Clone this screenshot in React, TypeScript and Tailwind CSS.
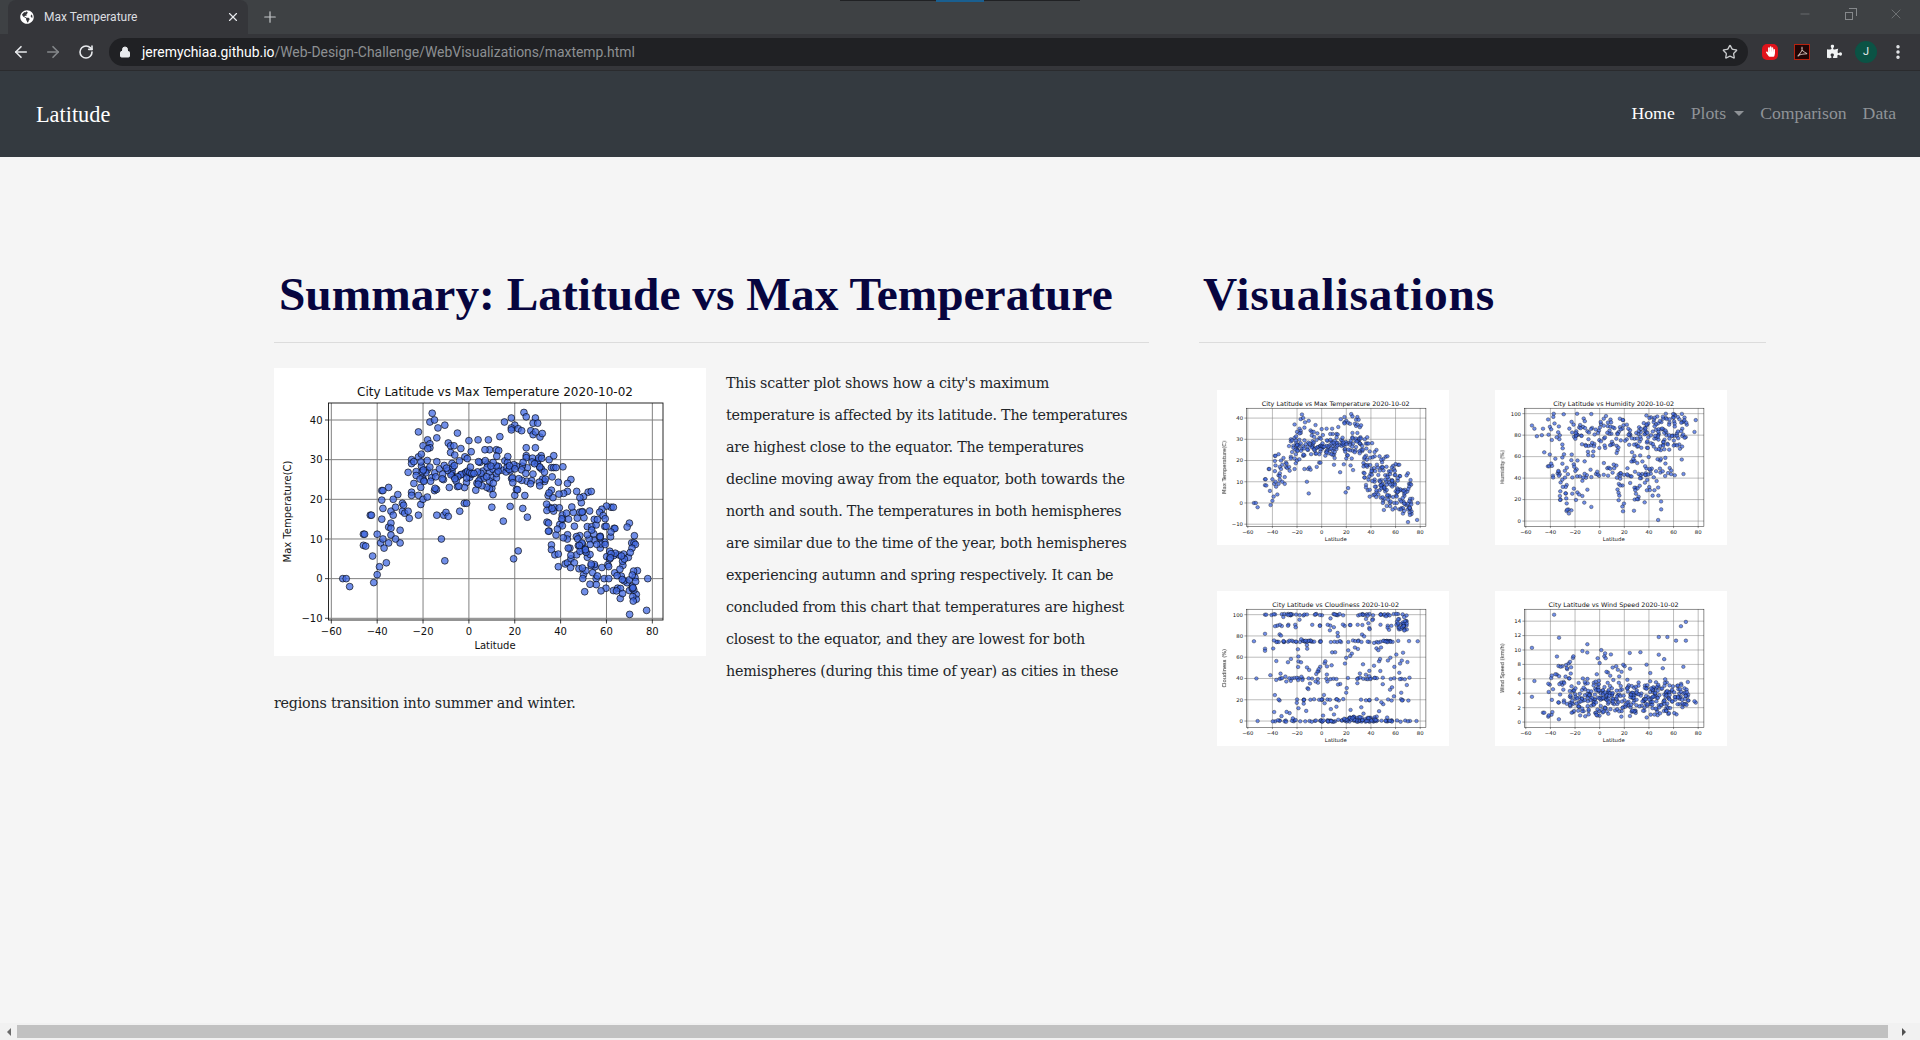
import React from 'react';
import { ArrowLeft, ArrowRight, RotateCw, Lock, Star, X, Plus, Minus, EllipsisVertical } from 'lucide-react';
import { FaGlobeAmericas, FaPuzzlePiece, FaHandPaper } from 'react-icons/fa';

type Pt = [number, number];

// seeded random so the picture stays the same on every load
const makeRng = (seed: number) => () => {
  seed = (seed * 1664525 + 1013904223) % 4294967296;
  return seed / 4294967296;
};

// points read off the main chart
const tempPoints: Pt[] = [
  [-55, 0], [-53.5, 0], [-52, -2], [-41.5, -1], [-40, 1], [-39, 3], [-42, 5.7], [-40, 11.2], [-46, 11.2], [-45.5, 11.2],
  [-46, 8.4], [-45, 8.2], [-43, 16], [-42.5, 16], [-38, 22.2], [-37.5, 22.2], [-35, 23], [-38, 19.8], [-37.5, 17.7], [-38, 15],
  [-38.5, 9], [-37.5, 10], [-37, 7.7], [-36, 4], [-35, 13], [-34, 14], [-34, 12.7], [-34, 11], [-35, 9], [-34, 17],
  [-33, 16], [-33, 20], [-32, 18], [-31, 21.2], [-30, 12.2], [-30, 9], [-32, 10], [-29, 19], [-28.5, 18.5], [-29, 17],
  [-28, 16.5], [-26.5, 17], [-26, 15.2], [-26.5, 26.8], [-25, 30], [-25, 29], [-24, 29.5], [-25, 21.8], [-25, 21], [-24, 24],
  [-23, 27], [-23, 26], [-22, 37], [-22, 30.7], [-22, 16], [-22, 21], [-21, 23], [-21, 18.7], [-20, 20], [-20, 33.5],
  [-18, 35], [-17, 34], [-17, 33], [-17, 39.5], [-16, 41.7], [-15, 40], [-13.5, 38], [-14, 35.5], [-14, 29.5], [-15, 22.2],
  [-14, 16], [-12, 10], [-10.5, 4.5], [-11, 16], [-10, 16.7], [-9, 15.7], [-10.5, 38.7], [-9, 34.2], [-8, 33.5], [-6.5, 33.5],
  [-5, 36.7], [-3.5, 32.8], [-8, 31.8], [-4, 17], [-2, 19], [-1, 19], [0, 34.8], [1, 32], [4, 35], [8.5, 35],
  [9, 32.5], [7, 32.5], [3, 22.3], [10, 18], [10, 22.8], [12, 32.5], [13, 32.3], [13.5, 35.8], [15, 14.5], [15.5, 39.5],
  [18, 18.2], [19.5, 5], [21.5, 7], [18.5, 40.5], [20, 38.7], [18.5, 38], [18.5, 37.5], [21.5, 37.8], [23, 37.3], [24, 41.9],
  [25, 40.8], [27, 37.3], [28, 36.3], [29, 37], [29, 40.5], [28, 39.2], [30, 39.2], [31, 35.7], [32, 36.6], [29, 33],
  [25, 33], [25, 31], [25, 30.5], [31.5, 31], [23.5, 17.7], [25.5, 15.5], [20, 21], [31, 28], [33, 24.5], [35, 30],
  [36, 28], [37, 31], [37, 28], [38, 28], [41, 28.2], [44.5, 25], [39, 24.3], [43, 24], [35, 12], [35, 18],
  [36, 8.5], [36, 7.3], [37.5, 6], [39, 6.2], [39, 3], [38, 11], [42, 3.7], [43, 4], [44.5, 5], [47, 6],
  [46, 4], [48, 2.5], [50, 1], [50.5, -3.3], [51, 2], [54, 1.5], [55, 3], [55.5, 0], [58, 2.8], [59, 0],
  [61, 0], [66, -5], [63, -3], [70, -3], [73, -4], [78, 0], [77.5, -8], [73.5, 2], [70, 14], [69, 13],
  [71, 9], [72, 9], [62, 18], [63, 18], [60, 18.3], [58, 17.5], [52, 21.8], [50, 20.7], [47, 22], [43, 22],
];

const buildTemp = (): Pt[] => {
  const r = makeRng(11);
  const gauss = () => (r() + r() + r() - 1.5) / 0.5;
  const pts = [...tempPoints];
  // dense band around the equator
  for (let i = 0; i < 135; i++) pts.push([-22 + r() * 56, 26.5 + gauss() * 2.2]);
  // the slide towards the north
  for (let i = 0; i < 140; i++) {
    const lat = 33 + r() * 40;
    pts.push([lat, 35 - lat * 0.48 + gauss() * 5]);
  }
  return pts;
};

const buildHumidity = (): Pt[] => {
  const r = makeRng(23);
  const pts: Pt[] = [[47.5, 1], [-25, 7], [-23, 10], [-55, 89], [-53, 86], [-51, 79], [-45, 64], [-42, 51], [-41, 51], [78, 94], [77, 83], [-47, 80], [-46, 86]];
  for (let i = 0; i < 30; i++) pts.push([-34 + r() * 28, 8 + r() * 36]);
  for (let i = 0; i < 48; i++) pts.push([14 + r() * 36, 8 + r() * 38]);
  for (let i = 0; i < 210; i++) pts.push([-42 + r() * 112, 40 + r() * 60]);
  for (let i = 0; i < 70; i++) pts.push([36 + r() * 35, 66 + r() * 34]);
  for (let i = 0; i < 50; i++) pts.push([-20 + r() * 60, 68 + r() * 22]);
  return pts;
};

const buildCloudiness = (): Pt[] => {
  const r = makeRng(37);
  const pts: Pt[] = [[-55, 75], [-53, 40], [-52, 0], [78, 75], [77, 0], [-46, 100], [-45, 100], [-46, 68], [-46, 66], [-46, 82]];
  const bands = [0, 0, 0, 20, 40, 75, 75, 90, 100, 100];
  for (let i = 0; i < 260; i++) pts.push([-42 + r() * 114, bands[Math.floor(r() * bands.length)] + (r() - 0.5) * 1.5]);
  for (let i = 0; i < 150; i++) pts.push([-42 + r() * 112, r() * 100]);
  for (let i = 0; i < 40; i++) pts.push([18 + r() * 26, r() * 4]);
  for (let i = 0; i < 20; i++) pts.push([60 + r() * 11, 85 + r() * 15]);
  return pts;
};

const buildWind = (): Pt[] => {
  const r = makeRng(53);
  const pts: Pt[] = [[-37, 14.9], [-55, 10.3], [-33, 11.7], [-10, 10.8], [48, 11.8], [55, 11.8], [66, 13.3], [70, 13.9], [62, 11.3], [70, 11.3], [78, 2.7], [77, 2.9], [-53, 5.7], [-55, 3.5], [-46, 1.3], [-45, 1.3]];
  for (let i = 0; i < 340; i++) pts.push([-25 + r() * 97, 0.3 + (r() + r()) * 3]);
  for (let i = 0; i < 70; i++) pts.push([-40 + r() * 112, 3 + r() * 7]);
  for (let i = 0; i < 30; i++) pts.push([-42 + r() * 20, 0.3 + r() * 8]);
  return pts;
};

type PlotProps = {
  title: string;
  ylabel: string;
  points: Pt[];
  yTicks: number[];
  yPx: [number, number]; // pixel of first and last tick
  height: number;
  bottom: number;
  titleY: number;
  className?: string;
};

const fmt = (n: number) => (n < 0 ? `\u2212${-n}` : `${n}`);

const ScatterPlot: React.FC<PlotProps> = ({ title, ylabel, points, yTicks, yPx, height, bottom, titleY, className }) => {
  const left = 54.5;
  const right = 389;
  const top = 35;
  const xScale = (v: number) => 194.9 + v * 2.293;
  const y0 = yTicks[0];
  const yN = yTicks[yTicks.length - 1];
  const yScale = (v: number) => yPx[0] + ((v - y0) / (yN - y0)) * (yPx[1] - yPx[0]);
  const xTicks = [-60, -40, -20, 0, 20, 40, 60, 80];
  const mid = (top + bottom) / 2;

  return (
    <svg viewBox={`0 0 432 ${height}`} preserveAspectRatio="none" className={className}>
      <rect width="432" height={height} fill="#fff" />
      <text x="221" y={titleY} fontSize="12" textAnchor="middle" fill="#111">{title}</text>
      {xTicks.map((t) => (
        <g key={t}>
          <line x1={xScale(t)} x2={xScale(t)} y1={top} y2={bottom} stroke="#808080" strokeWidth="1" />
          <line x1={xScale(t)} x2={xScale(t)} y1={bottom} y2={bottom + 3.5} stroke="#111" strokeWidth="0.8" />
          <text x={xScale(t)} y={bottom + 15} fontSize="10" textAnchor="middle" fill="#111">{fmt(t)}</text>
        </g>
      ))}
      {yTicks.map((t) => (
        <g key={t}>
          <line x1={left} x2={right} y1={yScale(t)} y2={yScale(t)} stroke="#808080" strokeWidth="1" />
          <line x1={left - 3.5} x2={left} y1={yScale(t)} y2={yScale(t)} stroke="#111" strokeWidth="0.8" />
          <text x={left - 6} y={yScale(t) + 3.6} fontSize="10" textAnchor="end" fill="#111">{fmt(t)}</text>
        </g>
      ))}
      {points.map(([x, y], i) => (
        <circle key={i} cx={xScale(x)} cy={yScale(y)} r="3.4" fill="#4169e1" fillOpacity="0.75" stroke="#000" strokeOpacity="0.7" strokeWidth="0.9" />
      ))}
      <rect x={left} y={top} width={right - left} height={bottom - top} fill="none" stroke="#111" strokeWidth="0.9" />
      <text x="221" y={bottom + 29} fontSize="10" textAnchor="middle" fill="#111">Latitude</text>
      <text x="17" y={mid} fontSize="10" textAnchor="middle" fill="#111" transform={`rotate(-90 17 ${mid})`}>{ylabel}</text>
    </svg>
  );
};

const temp = buildTemp();
const humidity = buildHumidity();
const cloudiness = buildCloudiness();
const wind = buildWind();

const Thumb: React.FC<Omit<PlotProps, 'height' | 'bottom' | 'titleY' | 'className'>> = (props) => (
  <div className="w-[232px] h-[155px] bg-white overflow-hidden">
    <div className="w-full h-full blur-[0.45px]">
      <ScatterPlot {...props} height={298} bottom={262} titleY={31} className="block w-full h-full [font-family:'DejaVu_Sans',sans-serif]" />
    </div>
  </div>
);

const BrowserChrome = () => (
  <div className="shrink-0 font-['Roboto',sans-serif]">
    {/* tab strip */}
    <div className="h-[34px] bg-[#3e4144] flex items-end relative">
      <div className="absolute top-0 left-[840px] w-[240px] h-px bg-[#202124]">
        <div className="ml-[96px] w-[48px] h-[2px] bg-[#1a5f90]" />
      </div>
      <div className="ml-2 w-[240px] h-[34px] bg-[#35363a] rounded-t-lg flex items-center pl-[12px] pr-[8px]">
        <FaGlobeAmericas className="w-[14px] h-[14px] text-white" />
        <span className="ml-[10px] text-xs text-[#dcdee0] flex-1">Max Temperature</span>
        <X className="w-[14px] h-[14px] text-[#e8eaed]" strokeWidth={2} />
      </div>
      <Plus className="ml-[13px] mb-[8px] w-[18px] h-[18px] text-[#c4c7c9]" strokeWidth={1.6} />
      <div className="ml-auto flex items-center h-full text-[#85888b]">
        <Minus className="w-[14px] h-[14px] mb-[6px]" strokeWidth={1} />
        <div className="ml-[33px] mb-[6px] w-[12px] h-[12px] relative">
          <div className="absolute left-0 bottom-0 w-[8px] h-[8px] border border-[#85888b]" />
          <div className="absolute right-0 top-0 w-[8px] h-[8px] border-t border-r border-[#85888b]" />
        </div>
        <X className="ml-[31px] mr-[16px] mb-[6px] w-[16px] h-[16px]" strokeWidth={1} />
      </div>
    </div>
    {/* toolbar */}
    <div className="h-[36.5px] bg-[#35363a] border-b border-[#2a2b2e] flex items-center">
      <ArrowLeft className="ml-[12px] w-[18px] h-[18px] text-[#e8eaed]" strokeWidth={2.2} />
      <ArrowRight className="ml-[14px] w-[18px] h-[18px] text-[#85888b]" strokeWidth={2.2} />
      <RotateCw className="ml-[16px] w-[16px] h-[16px] text-[#e8eaed]" strokeWidth={2.4} />
      <div className="ml-[14.5px] w-[1639.5px] h-[28px] rounded-full bg-[#202124] flex items-center pl-[10.5px] pr-[10px]">
        <Lock className="w-[12px] h-[12px] text-[#e8eaed]" fill="#e8eaed" strokeWidth={2} />
        <span className="ml-[11px] text-[13.93px] pt-px text-white">jeremychiaa.github.io<span className="text-[#8d9093]">/Web-Design-Challenge/WebVisualizations/maxtemp.html</span></span>
        <Star className="ml-auto w-[16px] h-[16px] text-[#c8cacc]" strokeWidth={2} />
      </div>
      <div className="ml-[14px] w-[16px] h-[16px] rounded-[5px] bg-[#e0131b] flex items-center justify-center">
        <FaHandPaper className="w-[9px] h-[11px] text-white" />
      </div>
      <div className="ml-[16px] w-[16px] h-[16px] bg-[#210606] border border-[#b8220f] flex items-center justify-center">
        <svg viewBox="0 0 14 14" className="w-[12px] h-[12px]" fill="none" stroke="#c9b6b0" strokeWidth="1.2">
          <path d="M7 1c-1 4 1 5 6 8M7 1c1 4-1 6-5 11M2 12c2-2 6-3 11-3" />
        </svg>
      </div>
      <FaPuzzlePiece className="ml-[16.5px] w-[15px] h-[15px] text-[#f1f3f4]" />
      <div className="ml-[13.5px] w-[22px] h-[22px] rounded-full bg-[#0b5345] flex items-center justify-center text-[11px] text-[#e8eaed]">J</div>
      <EllipsisVertical className="ml-[12px] w-[18px] h-[18px] text-[#e8eaed]" strokeWidth={2.6} />
    </div>
  </div>
);

const App: React.FC = () => {
  return (
    <div className="w-[1920px] h-[1040px] overflow-hidden flex flex-col bg-[#f5f5f5] font-['Liberation_Serif',serif]">
      <BrowserChrome />

      <nav className="shrink-0 h-[86.5px] bg-[#343a40] flex items-center justify-between pl-[36px] pr-[24px]">
        <a className="pt-px text-[22.3px] text-white">Latitude</a>
        <ul className="flex items-center gap-[16px] pb-px text-[17.7px] text-[#8f9397]">
          <li className="text-white font-medium">Home</li>
          <li className="flex items-center gap-[8px]">
            Plots
            <span className="border-x-[5px] border-x-transparent border-t-[5px] border-t-[#8f9397]" />
          </li>
          <li>Comparison</li>
          <li>Data</li>
        </ul>
      </nav>

      <main className="flex-1 pt-[110px] pl-[274px] flex gap-[50px]">
        <section className="w-[875px]">
          <h1 className="pl-[5px] h-[76px] text-[47.4px] leading-[54px] font-bold text-[#07053f] border-b border-[#dcdcdc]">
            Summary: Latitude vs Max Temperature
          </h1>
          <div className="mt-[25px] font-['DejaVu_Serif',serif] text-[14.3px] tracking-[-0.23px] leading-[32px] text-[#212529]">
            <ScatterPlot
              title="City Latitude vs Max Temperature 2020-10-02"
              ylabel="Max Temperature(C)"
              points={temp}
              yTicks={[40, 30, 20, 10, 0, -10]}
              yPx={[52, 250.3]}
              height={288}
              bottom={252}
              titleY={28}
              className="float-left mt-px mr-[20px] mb-[16px] w-[432px] h-[288px] tracking-normal [font-family:'DejaVu_Sans',sans-serif]"
            />
            <p className="w-[855px] -mt-px">
              This scatter plot shows how a city's maximum temperature is affected by its latitude. The temperatures are highest close to the equator. The temperatures decline moving away from the equator, both towards the north and south. The temperatures in both hemispheres are similar due to the time of the year, both hemispheres experiencing autumn and spring respectively. It can be concluded from this chart that temperatures are highest closest to the equator, and they are lowest for both hemispheres (during this time of year) as cities in these regions transition into summer and winter.
            </p>
          </div>
        </section>

        <section className="w-[567px]">
          <h2 className="pl-[4px] h-[76px] text-[47.4px] leading-[54px] tracking-[0.85px] font-bold text-[#07053f] border-b border-[#dcdcdc]">
            Visualisations
          </h2>
          <div className="mt-[47px] ml-[18px] grid grid-cols-[232px_233px] gap-x-[46px] gap-y-[46px]">
            <Thumb title="City Latitude vs Max Temperature 2020-10-02" ylabel="Max Temperature(C)" points={temp} yTicks={[40, 30, 20, 10, 0, -10]} yPx={[54, 258]} />
            <Thumb title="City Latitude vs Humidity 2020-10-02" ylabel="Humidity (%)" points={humidity} yTicks={[100, 80, 60, 40, 20, 0]} yPx={[45.5, 252]} />
            <Thumb title="City Latitude vs Cloudiness 2020-10-02" ylabel="Cloudiness (%)" points={cloudiness} yTicks={[100, 80, 60, 40, 20, 0]} yPx={[45.5, 250]} />
            <Thumb title="City Latitude vs Wind Speed 2020-10-02" ylabel="Wind Speed (km/h)" points={wind} yTicks={[14, 12, 10, 8, 6, 4, 2, 0]} yPx={[58, 252]} />
          </div>
        </section>
      </main>

      {/* horizontal scrollbar */}
      <div className="shrink-0 h-[17px] bg-[#f1f1f1] flex items-center">
        <div className="w-[17px] flex justify-center">
          <span className="border-y-[4px] border-y-transparent border-r-[4px] border-r-[#6b6b6b]" />
        </div>
        <div className="w-[1871px] h-[13px] bg-[#c1c1c1]" />
        <div className="flex-1 flex justify-center">
          <span className="border-y-[4px] border-y-transparent border-l-[4px] border-l-[#505050]" />
        </div>
      </div>
    </div>
  );
};

export default App;
